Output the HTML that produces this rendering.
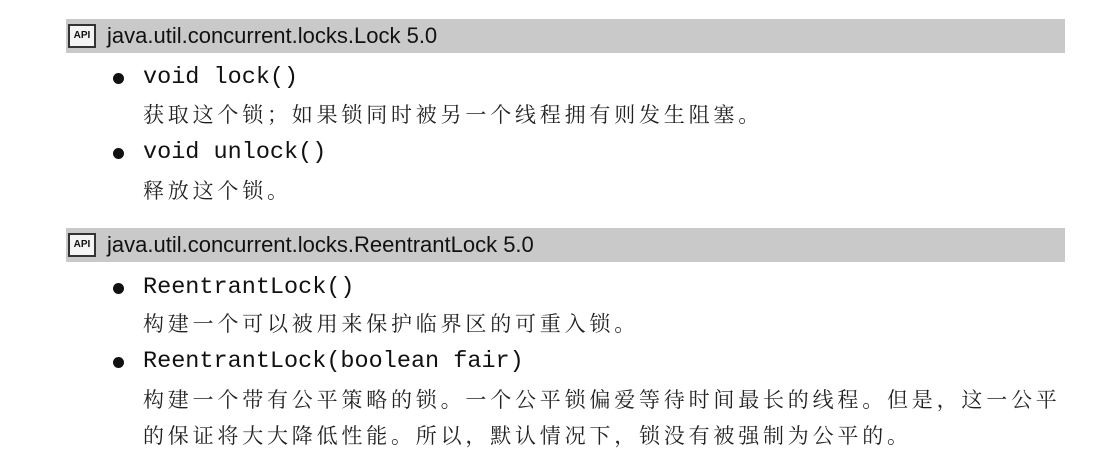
<!DOCTYPE html>
<html><head><meta charset="utf-8"><style>
body{margin:0;width:1108px;height:463px;background:#fff;position:relative;overflow:hidden;color:#222}
.bar{position:absolute;left:66px;width:999px;height:34px;background:#c9c9c9}
.icon{position:absolute;left:2px;top:5px;width:28px;height:24px;border:2px solid #333;background:#f4f4f4;box-sizing:border-box;font:bold 10px "Liberation Sans",sans-serif;line-height:20px;text-align:center;color:#111}
.ht{position:absolute;left:41px;top:0;font:22px "Liberation Sans",sans-serif;line-height:34px;color:#111;white-space:nowrap}
.code{position:absolute;left:143px;font:23.5px "Liberation Mono",monospace;line-height:28px;white-space:nowrap;color:#111}
.dot{position:absolute;left:113px;width:11px;height:11px;border-radius:50%;background:#111}
.cn{position:absolute;left:143px;font:21px "Noto Serif CJK SC","Liberation Serif",serif;line-height:28px;letter-spacing:3.8px;white-space:nowrap;color:#222}
</style></head><body>
<div class="bar" style="top:19px"><div class="icon">API</div><div class="ht">java.util.concurrent.locks.Lock 5.0</div></div>
<div class="dot" style="top:73px"></div><div class="code" style="top:64px">void lock()</div>
<div class="cn" style="top:100px">获取这个锁；如果锁同时被另一个线程拥有则发生阻塞。</div>
<div class="dot" style="top:148px"></div><div class="code" style="top:139px">void unlock()</div>
<div class="cn" style="top:176px">释放这个锁。</div>
<div class="bar" style="top:228px"><div class="icon">API</div><div class="ht">java.util.concurrent.locks.ReentrantLock 5.0</div></div>
<div class="dot" style="top:283px"></div><div class="code" style="top:274px">ReentrantLock()</div>
<div class="cn" style="top:309px">构建一个可以被用来保护临界区的可重入锁。</div>
<div class="dot" style="top:357px"></div><div class="code" style="top:348px">ReentrantLock(boolean fair)</div>
<div class="cn" style="top:385px">构建一个带有公平策略的锁。一个公平锁偏爱等待时间最长的线程。但是，这一公平</div>
<div class="cn" style="top:421px">的保证将大大降低性能。所以，默认情况下，锁没有被强制为公平的。</div>
</body></html>
